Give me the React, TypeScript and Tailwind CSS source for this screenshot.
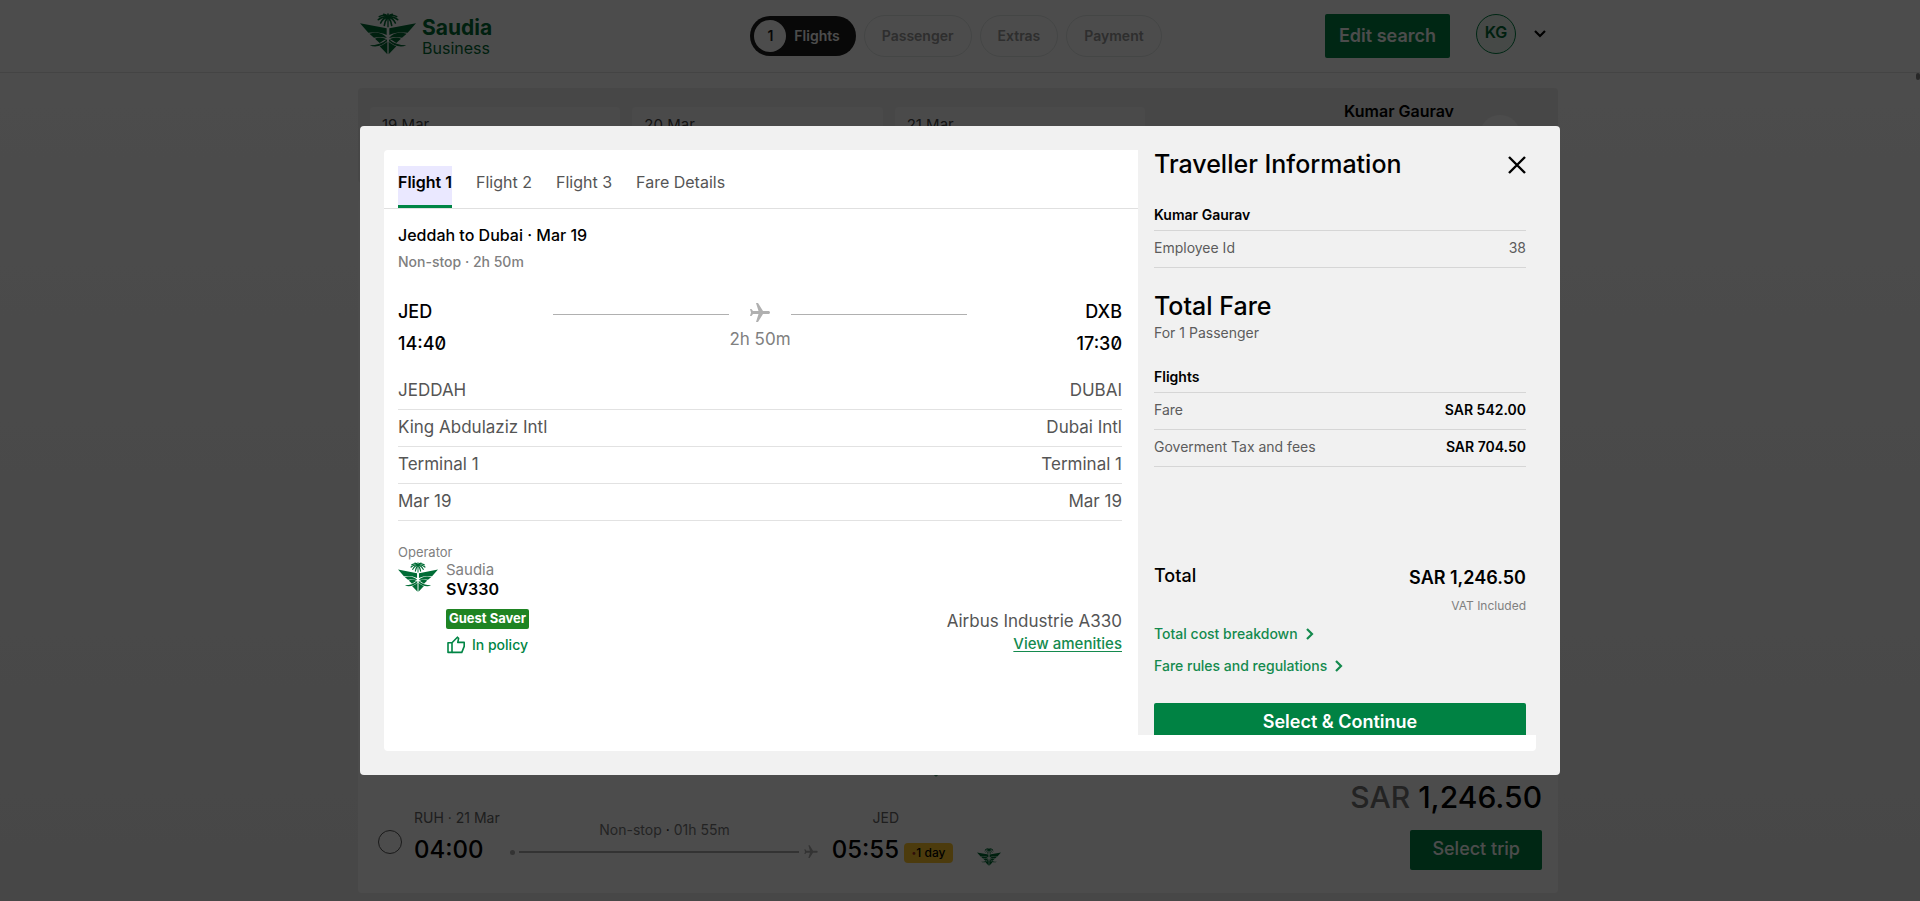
import React from "react";
import { MdFlight } from "react-icons/md";

function EmblemHalf() {
  return (
    <>
      <path d="M60 68 L140 83 V103 C122 94 106 95 85 96 Z" />
      <path d="M88 99 C110 93 130 98 141 112 C128 109 116 108 102 111 Z" />
      <path d="M105 114 C116 108 128 110 139 116 C130 119 125 123 119 127 Z" />
      <path d="M89 134 C110 134 128 128 141 116 V122 C128 134 108 143 89 134 Z" />
      <path d="M119 137 C130 132 136 128 142 123 V161 Z" />
    </>
  );
}

function Emblem({ className }: { className: string }) {
  return (
    <svg viewBox="60 37 168 124" className={className} fill="currentColor" aria-hidden="true">
      <EmblemHalf />
      <g transform="translate(288 0) scale(-1 1)">
        <EmblemHalf />
      </g>
      <path d="M142 52 H146 L146 80 H142 Z" />
      <g fill="none" stroke="currentColor" strokeWidth="5" strokeLinecap="round">
        <path d="M144 49 C136 42 126 43 118 48" />
        <path d="M144 49 C152 42 162 43 170 48" />
        <path d="M143 50 C132 46 122 51 115 57" />
        <path d="M145 50 C156 46 166 51 173 57" />
        <path d="M143 50 C134 51 126 58 122 67" />
        <path d="M145 50 C154 51 162 58 166 67" />
        <path d="M143 50 C138 57 134 65 133 74" />
        <path d="M145 50 C150 57 154 65 155 74" />
        <path d="M144 50 C140 44 136 41 131 41" />
        <path d="M144 50 C148 44 152 41 157 41" />
        <path d="M144 40 V50" />
      </g>
    </svg>
  );
}

function Chevron({ className }: { className: string }) {
  return (
    <svg viewBox="0 0 8 12" className={className} fill="none" stroke="currentColor" strokeWidth="2.2" aria-hidden="true">
      <path d="M1 1 L6 6 L1 11" />
    </svg>
  );
}

function ThumbUp({ className }: { className: string }) {
  return (
    <svg viewBox="0 0 20 20" className={className} fill="none" stroke="currentColor" strokeWidth="1.6" strokeLinejoin="round" aria-hidden="true">
      <path d="M2 7.8 H6 V17.4 H2 Z" />
      <path d="M6 7.8 L11.4 2.2 L12.6 3.4 L11.8 7.4 H18.2 V11.4 L15.8 17.4 H6" />
    </svg>
  );
}

function Header() {
  return (
    <header className="border-b border-[#e4e4e4] bg-white pr-1">
      <div className="mx-auto flex h-[72px] max-w-[1200px] items-center">
        <a href="#home" className="flex flex-1 items-center gap-[6px] pl-[2px] text-[#006c35]">
          <Emblem className="mb-1 w-14" />
          <span className="flex flex-col pt-[3px]">
            <span className="text-[21px] leading-[22px] font-bold">Saudia</span>
            <span className="text-base leading-[18px]">Business</span>
          </span>
        </a>
        <nav className="ml-2 flex items-center gap-2 text-sm font-semibold">
          <a href="#flights" className="flex h-10 items-center gap-2 rounded-full bg-[#1c1c1c] pr-4 pl-1 text-white">
            <span className="flex size-8 items-center justify-center rounded-full bg-white text-[#1c1c1c]">1</span>
            Flights
          </a>
          {["Passenger", "Extras", "Payment"].map((s) => (
            <a key={s} href={"#" + s} className="flex h-[42px] items-center rounded-full border border-[#e4e9e8] px-[17px] text-[#9a9a9a]">
              {s}
            </a>
          ))}
        </nav>
        <div className="flex flex-1 items-center justify-end pr-[14px]">
          <button className="h-11 rounded-xs bg-[#008243] px-[14px] text-lg font-semibold text-white">Edit search</button>
          <span className="mb-1 ml-[26px] flex size-10 items-center justify-center rounded-full border border-[#008243] bg-[#e9f3ee] pb-1 text-base font-semibold text-[#006c35]">
            KG
          </span>
          <Chevron className="mb-1 ml-5 h-3 w-2 rotate-90 text-black" />
        </div>
      </div>
    </header>
  );
}

function TripRow() {
  return (
    <div className="flex items-end pl-5">
      <div className="flex flex-1 items-end">
        <input
          type="radio"
          name="trip"
          aria-label="RUH to JED"
          className="mr-3 mb-4 size-6 appearance-none rounded-full border border-[#555]"
        />
        <div className="w-20 text-sm text-[#666]">
          <p className="leading-6 whitespace-nowrap">RUH · 21 Mar</p>
          <p className="text-2xl leading-10 font-medium text-black">04:00</p>
        </div>
        <div className="mx-4 w-[309px] pb-[10px]">
          <p className="text-center text-sm leading-5 text-[#777]">
            Non-stop <span className="text-black">·</span> 01h 55m
          </p>
          <div className="flex items-center gap-1 pt-1 text-[#aaa]">
            <span className="size-[5px] rounded-full bg-[#aaa]" />
            <span className="h-[2px] flex-1 bg-[#aaa]" />
            <MdFlight className="size-4 rotate-90" />
          </div>
        </div>
        <div className="flex w-16 flex-col items-end text-sm text-[#666]">
          <p className="leading-6">JED</p>
          <p className="text-2xl leading-10 font-medium text-black">05:55</p>
        </div>
        <span className="mb-[7px] ml-[5px] flex h-5 w-[49px] items-center justify-center rounded bg-[#ffc72c] text-xs font-medium whitespace-nowrap text-black">
          <span className="text-[9px] text-[#a03020]">•</span>1 day
        </span>
        <Emblem className="mb-1 ml-6 w-6 text-[#006c35]" />
      </div>
      <div className="flex flex-col items-end gap-[13px] pr-4">
        <p className="text-3xl leading-10 font-medium text-black">
          <span className="text-[#767676]">SAR</span> 1,246.50
        </p>
        <button className="h-10 rounded-xs bg-[#008243] px-[22px] pb-[2px] text-lg font-medium text-white">Select trip</button>
      </div>
    </div>
  );
}

function Background() {
  return (
    <div className="flex h-screen flex-col overflow-hidden bg-linear-to-b from-white to-[#eeeeee]">
      <Header />
      <div className="flex h-0 justify-end">
        <span className="h-[7px] w-1 shrink-0 rounded-full bg-[#888]" />
      </div>
      <div className="flex flex-1 justify-center pr-1">
        <main className="flex w-full max-w-[1200px] flex-col gap-4 pt-[15px] pb-2">
          <section className="flex h-[95px] rounded bg-[#efefef] px-3 pt-[19px]">
            <div className="grid w-[775px] grid-cols-3 gap-3">
              {["19 Mar", "20 Mar", "21 Mar"].map((d) => (
                <div key={d} className="rounded-sm bg-[#f8f8f8] px-3 pt-[6px] text-[15px] leading-6 text-[#444]">
                  {d}
                </div>
              ))}
            </div>
            <div className="flex flex-1 justify-end gap-[26px] pr-[26px]">
              <p className="-mt-2 text-base font-semibold text-black">Kumar Gaurav</p>
              <span className="mt-2 size-10 rounded-full bg-white" />
            </div>
          </section>
          <section className="flex flex-1 flex-col justify-end rounded bg-white pb-[23px]">
            <div className="pl-[566px] text-[#006c35]">
              <Emblem className="w-6" />
            </div>
            <TripRow />
          </section>
        </main>
      </div>
    </div>
  );
}

const places: [string, string][] = [
  ["JEDDAH", "DUBAI"],
  ["King Abdulaziz Intl", "Dubai Intl"],
  ["Terminal 1", "Terminal 1"],
  ["Mar 19", "Mar 19"],
];

function Clock({ value }: { value: string }) {
  return (
    <span>
      {value.slice(0, -1)}
      <span className="slashed-zero">{value.slice(-1)}</span>
    </span>
  );
}

function FlightPanel() {
  return (
    <div className="min-w-0 flex-1">
      <div role="tablist" className="flex gap-6 border-b border-[#e0e0e0] px-[14px] pt-4 text-base text-[#555]">
        <button role="tab" aria-selected="true" className="h-[42px] border-b-3 border-[#008545] bg-[#eae8ff] pt-2 pb-[15px] leading-4 font-semibold text-black">
          Flight 1
        </button>
        {["Flight 2", "Flight 3", "Fare Details"].map((t) => (
          <button key={t} role="tab" aria-selected="false" className="h-[42px] pt-2 pb-[18px] leading-4">
            {t}
          </button>
        ))}
      </div>
      <div className="px-[14px] pr-4 pt-4">
        <h2 className="text-base leading-5 font-medium text-black">Jeddah to Dubai · Mar 19</h2>
        <p className="pt-[7px] text-sm leading-5 font-medium text-[#808080]">Non-stop · 2h 50m</p>
        <div className="grid grid-cols-[3fr_8fr_3fr] pt-6">
          <div className="flex flex-col text-lg leading-8 font-medium text-black">
            <span>JED</span>
            <Clock value="14:40" />
          </div>
          <div className="flex pt-[18px] text-[#b0b0b0]">
            <span className="h-px flex-1 bg-[#b0b0b0]" />
            <div className="-mt-[13px] flex w-[62px] flex-col items-center whitespace-nowrap">
              <MdFlight className="size-6 rotate-90" />
              <span className="text-[17px] leading-7 text-[#808080]">2h 50m</span>
            </div>
            <span className="h-px flex-1 bg-[#b0b0b0]" />
          </div>
          <div className="flex flex-col text-right text-lg leading-8 font-medium text-black">
            <span>DXB</span>
            <Clock value="17:30" />
          </div>
        </div>
        <div className="pt-[13px] text-[17px] text-[#555]">
          {places.map(([a, b], i) => (
            <div key={i} className="flex h-[37px] items-center justify-between border-b border-[#e2e2e2]">
              <span>{a}</span>
              <span>{b}</span>
            </div>
          ))}
        </div>
        <p className="pt-[23px] text-[13px] leading-4 text-[#808080]">Operator</p>
        <div className="flex gap-2 pt-[2px]">
          <Emblem className="h-[30px] w-10 text-[#006c35]" />
          <div className="flex flex-1 flex-col items-start">
            <span className="text-[15px] leading-4 text-[#808080]">Saudia</span>
            <span className="text-base leading-[22px] font-semibold text-black">SV330</span>
            <span className="mt-[9px] rounded-xs bg-[#1f8423] px-[3px] pb-[2px] text-[13px] leading-[18px] font-bold text-white">Guest Saver</span>
            <span className="flex items-center gap-[6px] pt-[6px] text-sm leading-5 font-medium text-[#008545]">
              <ThumbUp className="size-5" />
              In policy
            </span>
          </div>
          <div className="flex flex-col items-end justify-end">
            <span className="text-[17px] leading-6 text-[#555]">Airbus Industrie A330</span>
            <a href="#amenities" className="text-[15px] leading-[22px] font-medium text-[#148a4e] underline underline-offset-2">
              View amenities
            </a>
          </div>
        </div>
      </div>
    </div>
  );
}

function Line({ label, value, bold }: { label: string; value: string; bold?: boolean }) {
  return (
    <div className="flex h-[37px] items-center justify-between border-b border-[#d6d6d6] pb-[2px]">
      <span className="text-[#5c5c5c]">{label}</span>
      <span className={bold ? "font-semibold text-black" : "text-[#5c5c5c]"}>{value}</span>
    </div>
  );
}

function FarePanel() {
  return (
    <aside className="max-h-[585px] w-[398px] shrink-0 overflow-hidden bg-[#f1f1f1] pr-[10px] pl-4 text-sm">
      <div className="flex items-center justify-between">
        <h2 className="text-[25px] leading-7 font-medium text-black">Traveller Information</h2>
        <button aria-label="Close" className="pt-[2px] text-black">
          <svg viewBox="0 0 18 18" className="size-[18px]" fill="none" stroke="currentColor" strokeWidth="2.4">
            <path d="M1 1 L17 17 M17 1 L1 17" />
          </svg>
        </button>
      </div>
      <h3 className="mt-[27px] border-b border-[#d6d6d6] pb-[5px] leading-5 font-semibold text-black">Kumar Gaurav</h3>
      <Line label="Employee Id" value="38" />
      <h2 className="pt-6 text-[25px] leading-7 font-medium text-black">Total Fare</h2>
      <p className="pt-[3px] leading-5 text-[#5c5c5c]">For 1 Passenger</p>
      <h3 className="mt-6 border-b border-[#d6d6d6] pb-[5px] leading-5 font-semibold text-black">Flights</h3>
      <Line label="Fare" value="SAR 542.00" bold />
      <Line label="Goverment Tax and fees" value="SAR 704.50" bold />
      <div className="flex items-end justify-between pt-[95px] text-lg text-black">
        <span className="pb-[2px] leading-7 font-medium">Total</span>
        <span className="leading-7 font-semibold">SAR 1,246.50</span>
      </div>
      <p className="pt-1 text-right text-xs leading-5 text-[#808080]">VAT Included</p>
      <div className="flex flex-col items-start gap-3 pt-2 leading-5 font-medium text-[#148a4e]">
        <a href="#breakdown" className="flex items-center gap-2">
          Total cost breakdown <Chevron className="h-3 w-2" />
        </a>
        <a href="#rules" className="flex items-center gap-2">
          Fare rules and regulations <Chevron className="h-3 w-2" />
        </a>
      </div>
      <button className="mt-[27px] h-10 w-full rounded-xs bg-[#008243] pb-[2px] text-lg font-semibold text-white">Select &amp; Continue</button>
    </aside>
  );
}

export default function App() {
  return (
    <div className="font-['Inter',sans-serif]">
      <Background />
      <div className="fixed inset-0 flex items-center justify-center bg-black/70">
        <div role="dialog" aria-label="Trip details" className="w-full max-w-[1200px] rounded bg-[#f1f1f1] p-6">
          <div className="flex items-start rounded bg-white pb-4">
            <FlightPanel />
            <FarePanel />
          </div>
        </div>
      </div>
    </div>
  );
}
